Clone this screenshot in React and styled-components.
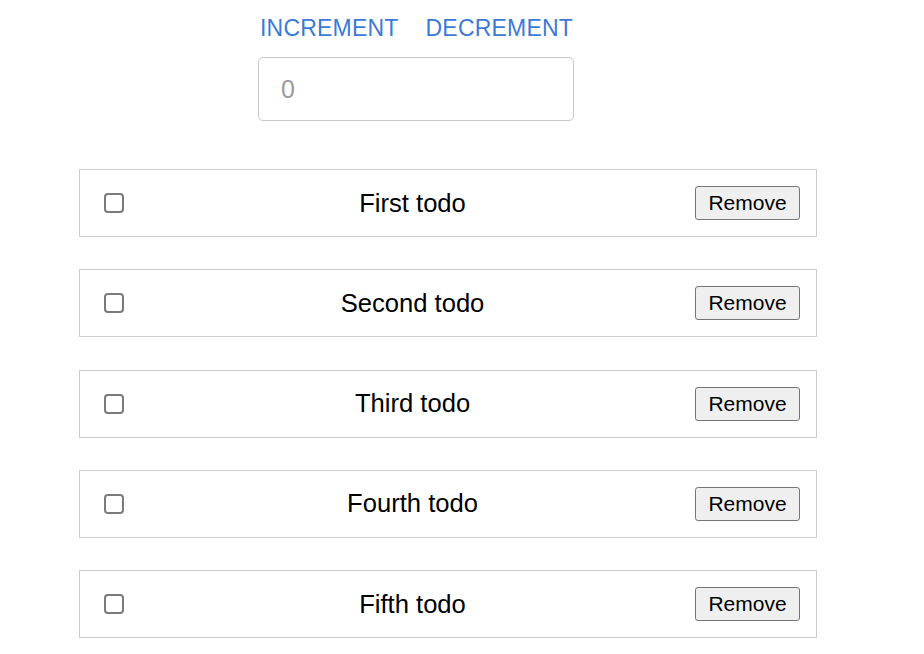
import React, { useState } from "react";
import styled, { createGlobalStyle } from "styled-components";

const GlobalStyle = createGlobalStyle`
  html, body { margin: 0; padding: 0; background: #ffffff; }
  body { font-family: "Liberation Sans", Arial, sans-serif; }
`;

const Page = styled.div`
  width: 738px;
  margin-left: 79px;
  padding-top: 17px;
`;

const Header = styled.div`
  margin-left: 179px;
  display: flex;
  flex-direction: column;
  gap: 17px;
`;

const ButtonRow = styled.div`
  display: flex;
  gap: 27px;
  padding-left: 2px;
`;

const TextButton = styled.button`
  background: none;
  border: none;
  padding: 0;
  margin: 0;
  font-family: "Liberation Sans", Arial, sans-serif;
  font-size: 23px;
  line-height: 23px;
  letter-spacing: 0.2px;
  color: #3b7ad6;
  text-transform: uppercase;
  cursor: pointer;
`;

const CountInput = styled.input`
  box-sizing: border-box;
  width: 316px;
  height: 64px;
  border: 1px solid #c8c8c8;
  border-radius: 5px;
  padding: 0 0 0 22px;
  font-family: "Liberation Sans", Arial, sans-serif;
  font-size: 25px;
  color: #333;
  outline: none;
  &::placeholder { color: #9b9b9b; }
`;

const List = styled.div`
  margin-top: 48px;
  display: flex;
  flex-direction: column;
  gap: 32.3px;
`;

const Row = styled.div`
  box-sizing: border-box;
  height: 68px;
  border: 1px solid #cccccc;
  display: flex;
  align-items: center;
  padding: 0 16px 0 24px;
`;

const Check = styled.input.attrs({ type: "checkbox" })`
  appearance: none;
  -webkit-appearance: none;
  box-sizing: border-box;
  width: 20px;
  height: 20px;
  margin: 0;
  border: 2px solid #7a7a7a;
  border-radius: 4px;
  background: #fff;
  cursor: pointer;
  &:checked { background: #0075ff; border-color: #0075ff; }
`;

const Label = styled.span`
  flex: 1;
  text-align: center;
  font-size: 25.6px;
  color: #000;
  padding-left: 6px;
`;

const RemoveButton = styled.button`
  box-sizing: border-box;
  height: 34px;
  width: 105px;
  padding: 0;
  font-family: "Liberation Sans", Arial, sans-serif;
  font-size: 21px;
  color: #000;
  background: #efefef;
  border: 1px solid #767676;
  border-radius: 3px;
  cursor: pointer;
`;

const initial = ["First todo", "Second todo", "Third todo", "Fourth todo", "Fifth todo"];

export default function App() {
  const [count, setCount] = useState(0);
  const [todos, setTodos] = useState(initial);
  return (
    <>
      <GlobalStyle />
      <Page>
        <Header>
          <ButtonRow>
            <TextButton onClick={() => setCount(count + 1)}>Increment</TextButton>
            <TextButton onClick={() => setCount(count - 1)}>Decrement</TextButton>
          </ButtonRow>
          <CountInput placeholder={String(count)} readOnly />
        </Header>
        <List>
          {todos.map((t, i) => (
            <Row key={t}>
              <Check />
              <Label>{t}</Label>
              <RemoveButton onClick={() => setTodos(todos.filter((_, j) => j !== i))}>Remove</RemoveButton>
            </Row>
          ))}
        </List>
      </Page>
    </>
  );
}
